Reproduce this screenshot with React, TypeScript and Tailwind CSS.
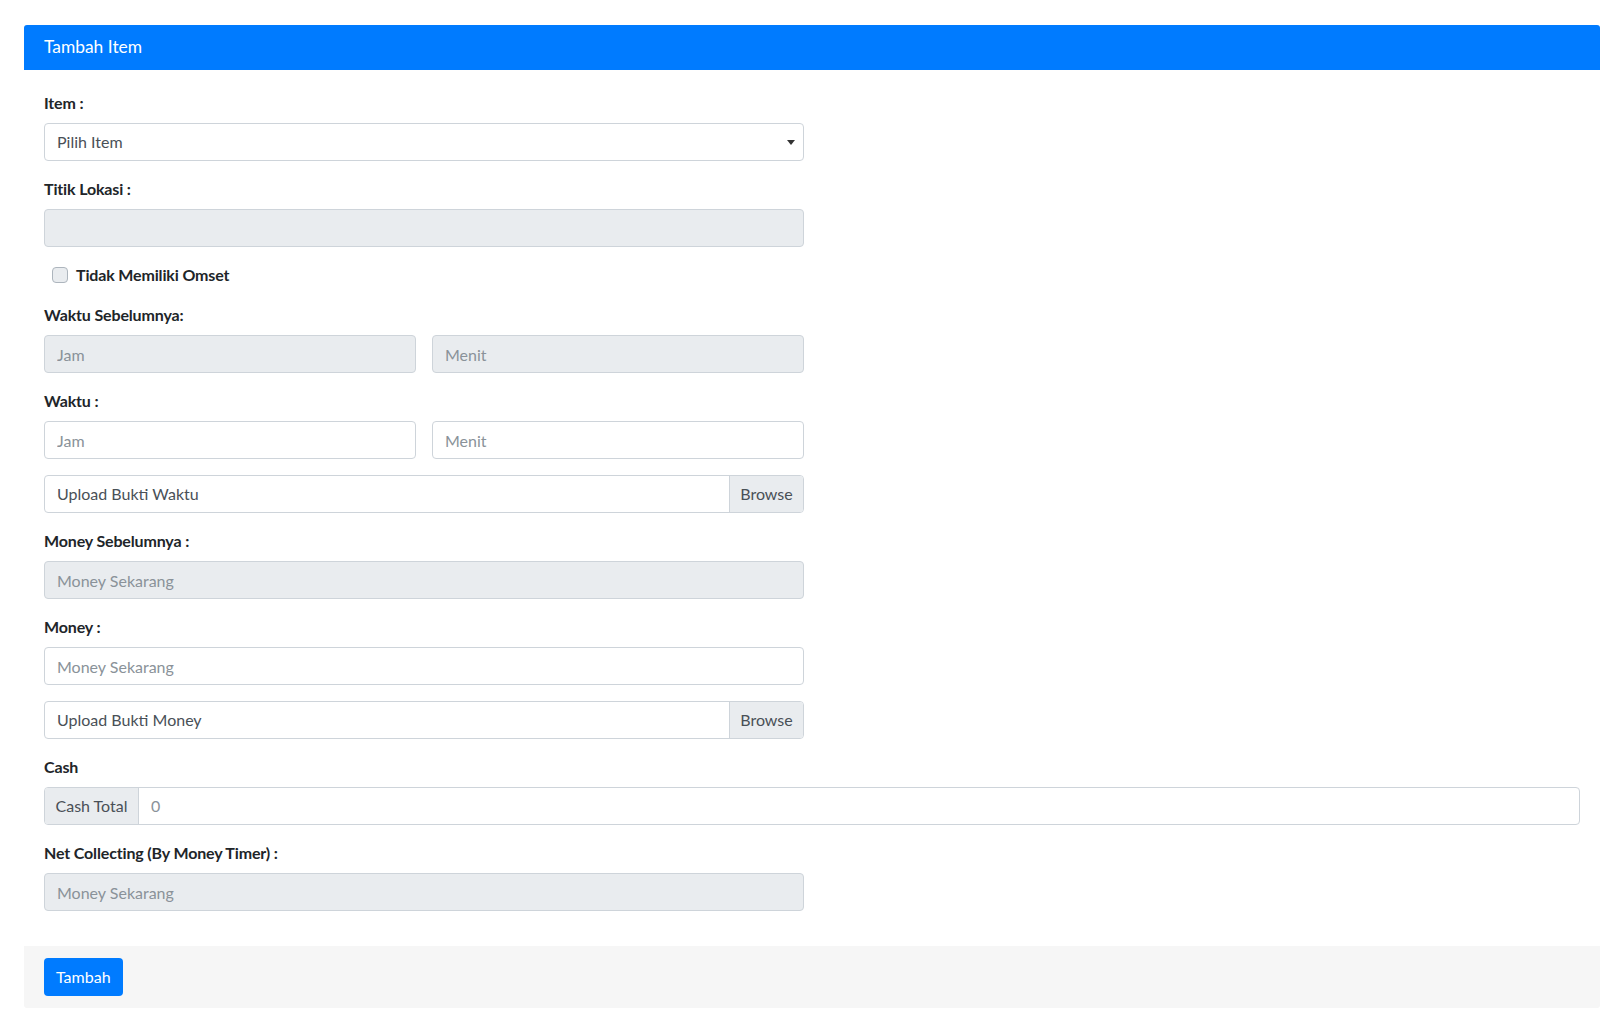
import React from "react";

const inputBase =
  "h-[38px] w-full rounded-[4px] border border-[#ced4da] px-3 text-[16px] text-[#495057] placeholder:text-[#8a9299] outline-none";

function Label({ children }: { children: React.ReactNode }) {
  return (
    <label className="mb-2 block text-[16px] font-bold leading-6 tracking-[-0.15px] text-[#212529]">
      {children}
    </label>
  );
}

function TextInput({ placeholder, disabled }: { placeholder?: string; disabled?: boolean }) {
  return (
    <input
      readOnly
      placeholder={placeholder}
      className={`${inputBase} ${disabled ? "bg-[#e9ecef]" : "bg-white"}`}
    />
  );
}

function FileInput({ text }: { text: string }) {
  return (
    <div className="flex h-[38px] w-full overflow-hidden rounded-[4px] border border-[#ced4da] bg-white text-[16px] text-[#495057]">
      <div className="flex flex-1 items-center px-3">{text}</div>
      <div className="flex w-[74px] items-center justify-center border-l border-[#ced4da] bg-[#e9ecef]">Browse</div>
    </div>
  );
}

export default function App() {
  return (
    <div className="min-h-[1033px] bg-white px-6 pt-[25px] font-[Lato,'Liberation_Sans',sans-serif]">
      <div className="w-full">
        <div className="flex h-[45px] items-center rounded-t-[3px] bg-[#007bff] px-5 text-[17.4px] text-white">
          Tambah Item
        </div>
        <div className="px-5 pb-[19px] pt-[21px]">
          <div className="w-[760px]">
            <div className="mb-4">
              <Label>Item :</Label>
              <div className="flex h-[38px] w-full items-center justify-between rounded-[4px] border border-[#ced4da] bg-white pl-3 pr-2 text-[16px] text-[#495057]">
                <span>Pilih Item</span>
                <span className="h-0 w-0 border-x-[4px] border-t-[5px] border-x-transparent border-t-[#333]" />
              </div>
            </div>
            <div className="mb-4">
              <Label>Titik Lokasi :</Label>
              <TextInput disabled />
            </div>
            <div className="mb-4 flex h-6 items-center pl-2">
              <span className="mr-2 h-4 w-4 rounded-[4px] border border-[#adb5bd] bg-[#e9ecef]" />
              <span className="text-[16px] font-bold leading-6 tracking-[-0.15px] text-[#212529]">
                Tidak Memiliki Omset
              </span>
            </div>
            <div className="mb-4">
              <Label>Waktu Sebelumnya:</Label>
              <div className="grid grid-cols-2 gap-4">
                <TextInput placeholder="Jam" disabled />
                <TextInput placeholder="Menit" disabled />
              </div>
            </div>
            <div className="mb-4">
              <Label>Waktu :</Label>
              <div className="grid grid-cols-2 gap-4">
                <TextInput placeholder="Jam" />
                <TextInput placeholder="Menit" />
              </div>
            </div>
            <div className="mb-4">
              <FileInput text="Upload Bukti Waktu" />
            </div>
            <div className="mb-4">
              <Label>Money Sebelumnya :</Label>
              <TextInput placeholder="Money Sekarang" disabled />
            </div>
            <div className="mb-4">
              <Label>Money :</Label>
              <TextInput placeholder="Money Sekarang" />
            </div>
            <div className="mb-4">
              <FileInput text="Upload Bukti Money" />
            </div>
          </div>
          <div className="mb-4">
            <Label>Cash</Label>
            <div className="flex h-[38px] w-full overflow-hidden rounded-[4px] border border-[#ced4da] bg-white text-[16px]">
              <div className="flex w-[94px] items-center justify-center border-r border-[#ced4da] bg-[#e9ecef] text-[#495057]">
                Cash Total
              </div>
              <input
                readOnly
                placeholder="0"
                className="flex-1 px-3 text-[16px] text-[#495057] placeholder:text-[#8a9299] outline-none"
              />
            </div>
          </div>
          <div className="w-[760px]">
            <div className="mb-4">
              <Label>Net Collecting (By Money Timer) :</Label>
              <TextInput placeholder="Money Sekarang" disabled />
            </div>
          </div>
        </div>
        <div className="rounded-b-[3px] bg-[#f6f6f6] px-5 py-3">
          <button className="h-[38px] rounded-[4px] bg-[#007bff] px-3 text-[16px] text-white">Tambah</button>
        </div>
      </div>
    </div>
  );
}
